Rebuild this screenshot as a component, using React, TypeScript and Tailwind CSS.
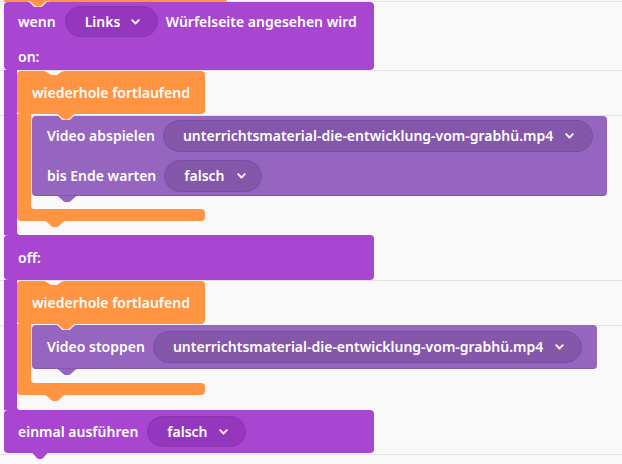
import React from "react";

const TAB_D =
  "M0 0 C1.5 0 2.5 0.5 3.5 1.5 L7.5 5.5 C8.5 6.5 9.5 7 11 7 H13 C14.5 7 15.5 6.5 16.5 5.5 L20.5 1.5 C21.5 0.5 22.5 0 24 0 Z";
const TAB_OUT =
  "M0 0 C1.5 0 2.5 0.5 3.5 1.5 L7.5 5.5 C8.5 6.5 9.5 7 11 7 H13 C14.5 7 15.5 6.5 16.5 5.5 L20.5 1.5 C21.5 0.5 22.5 0 24 0";

function Tab({
  className,
  color,
  w = 22,
  h = 6,
  outline,
}: {
  className: string;
  color: string;
  w?: number;
  h?: number;
  outline?: string;
}) {
  return (
    <svg
      className={className}
      width={w}
      height={h}
      viewBox="0 0 24 7"
      preserveAspectRatio="none"
    >
      <path d={TAB_D} fill={color} />
      {outline ? (
        <path d={TAB_OUT} fill="none" stroke={outline} strokeWidth={1.2} vectorEffect="non-scaling-stroke" />
      ) : null}
    </svg>
  );
}

function Chevron() {
  return (
    <svg width="9" height="6" viewBox="0 0 9 6" className="shrink-0">
      <path d="M1.2 1.2 L4.5 4.5 L7.8 1.2" fill="none" stroke="#ffffff" strokeWidth="1.8" strokeLinecap="round" strokeLinejoin="round" />
    </svg>
  );
}

function PurplePill({ label, w }: { label: string; w: string }) {
  return (
    <div className={`flex h-[31px] items-center gap-[11px] rounded-full border border-[#8a33b3] bg-[#9437bd] pl-[19px] ${w}`}>
      <span>{label}</span>
      <Chevron />
    </div>
  );
}

function VideoPill({ label, w }: { label: string; w: string }) {
  return (
    <div className={`flex h-[32px] items-center gap-[12px] rounded-full border border-[#7a4ea2] bg-[#8457ab] pl-[19px] ${w}`}>
      <span className="whitespace-nowrap">{label}</span>
      <Chevron />
    </div>
  );
}

const FILE = "unterrichtsmaterial-die-entwicklung-vom-grabhü.mp4";

export default function App() {
  return (
    <div className="relative h-[464px] w-[622px] overflow-hidden bg-[#f9f9f9] font-['Noto_Sans',sans-serif] text-[14px] font-semibold leading-none text-white">
      {/* background row lines */}
      <div className="pointer-events-none absolute inset-0 flex flex-col">
        <div className="mt-[1px] h-px bg-[#e4e4e4]" />
        <div className="mt-[68px] h-px bg-[#e4e4e4]" />
        <div className="mt-[44px] h-px bg-[#e4e4e4]" />
        <div className="mt-[164px] h-px bg-[#e4e4e4]" />
        <div className="mt-[44px] h-px bg-[#e4e4e4]" />
        <div className="mt-[128px] h-px bg-[#e4e4e4]" />
      </div>

      {/* bottom of previous block */}
      <div className="relative ml-[4px] h-[2px] w-[223px] rounded-br-[3px] bg-[#ff9443]" />

      {/* main purple block */}
      <div className="relative ml-[4px] flex w-max flex-col">
        {/* header */}
        <div className="relative flex h-[68px] w-[370px] flex-col rounded-[4px] bg-[#a845d1] pl-[14px]">
          <Tab className="absolute left-[23px] top-[-1px]" color="#ff9443" w={22} h={6} outline="#f4e6f9" />
          <div className="mt-[4px] flex h-[31px] items-center">
            <span>wenn</span>
            <div className="ml-[9px]">
              <PurplePill label="Links" w="w-[93px]" />
            </div>
            <span className="ml-[8px]">Würfelseite angesehen wird</span>
          </div>
          <div className="mt-[13px]">on:</div>
        </div>

        {/* middle 1 */}
        <div className="relative flex">
          <div className="w-[13px] shrink-0 bg-[#a845d1]" />
          <div className="absolute bottom-0 left-[13px] h-[4px] w-[4px] bg-[radial-gradient(circle_at_100%_0%,transparent_4px,#a845d1_4.6px)]" />
          <div className="flex flex-col pb-[14px] pt-[1px]">
            {/* orange C1 */}
            <div className="relative flex h-[43px] w-[188px] items-center rounded-[4px] bg-[#ff9443] pl-[15px]">
              <Tab className="absolute left-[26px] top-0" color="#f9f9f9" w={22} h={4} />
              <span>wiederhole fortlaufend</span>
              <Tab className="absolute bottom-[-6px] left-[38px] z-10" color="#ff9443" w={22} h={6} outline="#f4ecf8" />
            </div>
            <div className="relative flex">
              <div className="w-[14px] shrink-0 bg-[#ff9443]" />
              <div className="absolute bottom-0 left-[14px] h-[4px] w-[4px] bg-[radial-gradient(circle_at_100%_0%,transparent_4px,#ff9443_4.6px)]" />
              <div className="flex flex-col pb-[13px] pl-[1px] pt-[2px]">
                <div className="relative flex h-[80px] w-[575px] flex-col gap-[8px] rounded-[4px] border-b border-[#8558b0] bg-[#9565c0] pl-[15px] pt-[4px]">
                  <div className="flex h-[32px] items-center">
                    <span>Video abspielen</span>
                    <div className="ml-[8px]">
                      <VideoPill label={FILE} w="w-[430px]" />
                    </div>
                  </div>
                  <div className="flex h-[32px] items-center">
                    <span>bis Ende warten</span>
                    <div className="ml-[8px]">
                      <VideoPill label="falsch" w="w-[98px]" />
                    </div>
                  </div>
                  <Tab className="absolute bottom-[-7px] left-[24px]" color="#9565c0" w={22} h={6} />
                </div>
              </div>
            </div>
            <div className="relative h-[12px] w-[188px] rounded-b-[4px] rounded-tr-[4px] bg-[#ff9443]">
              <Tab className="absolute bottom-[-6px] left-[27px]" color="#ff9443" w={22} h={6} />
            </div>
          </div>
        </div>

        {/* off section */}
        <div className="flex h-[45px] w-[370px] items-center rounded-[4px] bg-[#a845d1] pl-[14px]">
          <span>off:</span>
        </div>

        {/* middle 2 */}
        <div className="relative flex">
          <div className="w-[13px] shrink-0 bg-[#a845d1]" />
          <div className="absolute bottom-0 left-[13px] h-[4px] w-[4px] bg-[radial-gradient(circle_at_100%_0%,transparent_4px,#a845d1_4.6px)]" />
          <div className="flex flex-col pb-[15px] pt-[1px]">
            <div className="relative flex h-[43px] w-[188px] items-center rounded-[4px] bg-[#ff9443] pl-[15px]">
              <Tab className="absolute left-[26px] top-0" color="#f9f9f9" w={22} h={4} />
              <span>wiederhole fortlaufend</span>
              <Tab className="absolute bottom-[-6px] left-[38px] z-10" color="#ff9443" w={22} h={6} outline="#f4ecf8" />
            </div>
            <div className="relative flex">
              <div className="w-[14px] shrink-0 bg-[#ff9443]" />
              <div className="absolute bottom-0 left-[14px] h-[4px] w-[4px] bg-[radial-gradient(circle_at_100%_0%,transparent_4px,#ff9443_4.6px)]" />
              <div className="flex flex-col pb-[14px] pl-[1px] pt-[1px]">
                <div className="relative flex h-[44px] w-[565px] items-center rounded-[4px] border-b border-[#8558b0] bg-[#9565c0] pl-[15px]">
                  <span>Video stoppen</span>
                  <div className="ml-[8px]">
                    <VideoPill label={FILE} w="w-[429px]" />
                  </div>
                  <Tab className="absolute bottom-[-7px] left-[24px]" color="#9565c0" w={22} h={6} />
                </div>
              </div>
            </div>
            <div className="relative h-[12px] w-[188px] rounded-b-[4px] rounded-tr-[4px] bg-[#ff9443]">
              <Tab className="absolute bottom-[-6px] left-[27px]" color="#ff9443" w={22} h={6} />
            </div>
          </div>
        </div>

        {/* bottom section */}
        <div className="relative flex h-[43px] w-[370px] items-center rounded-[4px] bg-[#a845d1] pl-[14px]">
          <span>einmal ausführen</span>
          <div className="ml-[9px]">
            <PurplePill label="falsch" w="w-[99px]" />
          </div>
          <Tab className="absolute bottom-[-6px] left-[27px]" color="#a845d1" w={18} h={6} />
        </div>
      </div>
    </div>
  );
}
